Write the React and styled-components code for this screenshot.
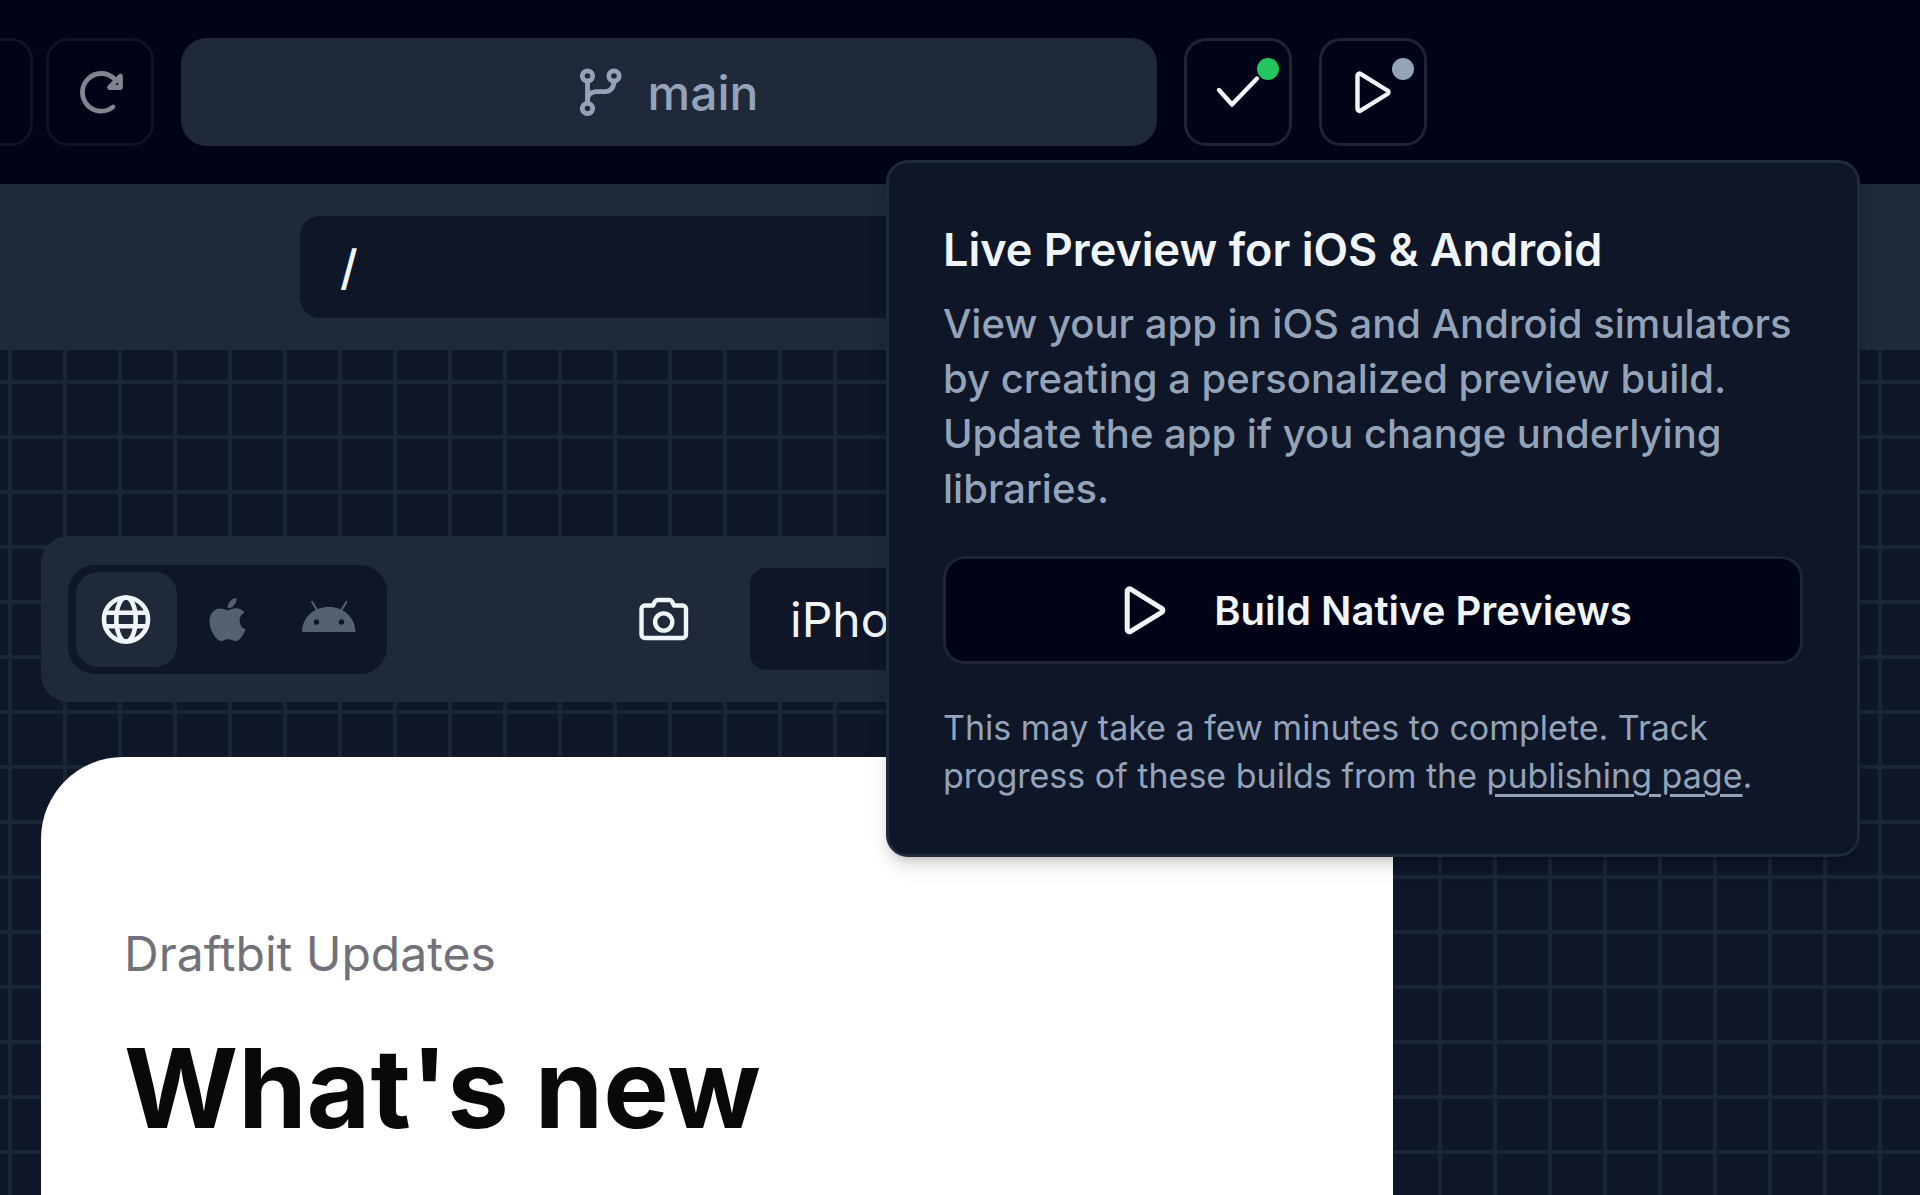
import React, { useState } from "react";
import styled, { createGlobalStyle, css } from "styled-components";
import { FaApple } from "react-icons/fa";

const GlobalStyle = createGlobalStyle`
  * {
    box-sizing: border-box;
  }

  body {
    margin: 0;
    overflow-x: hidden;
    background: #0e1628;
    color: #f1f5f9;
    font-family: Inter, "Liberation Sans", sans-serif;
  }

  h1, h2, p {
    margin: 0;
  }

  button, input, select {
    font: inherit;
    color: inherit;
  }
`;

const Page = styled.div`
  display: flex;
  flex-direction: column;
  min-height: 100vh;
`;

const Header = styled.header`
  display: flex;
  align-items: center;
  gap: 27px;
  padding: 38px 493px 38px 0;
  background: #000416;
`;

const HistoryNav = styled.nav`
  display: flex;
  gap: 13px;
  margin-left: -75px;
`;

const IconButton = styled.button`
  position: relative;
  display: flex;
  align-items: center;
  justify-content: center;
  flex: none;
  width: 108px;
  height: 108px;
  padding: 0;
  border: 3px solid #1e2436;
  border-radius: 22px;
  background: transparent;
  cursor: pointer;

  ${(props) =>
    props.disabled &&
    css`
      border-color: #0f1425;
      color: #82848f;
      cursor: default;
    `}
`;

const StatusDot = styled.span`
  position: absolute;
  top: 17px;
  right: 10px;
  width: 22px;
  height: 22px;
  border-radius: 50%;
  background: ${(props) => props.$color};
`;

const BranchButton = styled.button`
  display: flex;
  flex: 1;
  align-items: center;
  justify-content: center;
  gap: 24px;
  height: 108px;
  padding: 0;
  border: 0;
  border-radius: 26px;
  background: #1f293a;
  color: #94a3b8;
  font-size: 48px;
  font-weight: 500;
  cursor: pointer;
`;

const PreviewMenu = styled.div`
  position: relative;
  flex: none;
`;

const Popover = styled.section`
  position: absolute;
  z-index: 10;
  top: calc(100% + 14px);
  left: 50%;
  width: 974px;
  padding: 54px;
  border: 3px solid #1e293b;
  border-radius: 22px;
  background: #0e1628;
  box-shadow: 0 11px 20px -3px rgba(0, 0, 0, 0.15),
    0 5px 11px -5px rgba(0, 0, 0, 0.2);
  transform: translateX(-50%);
`;

const PopoverTitle = styled.h2`
  margin-bottom: 13px;
  font-size: 45px;
  font-weight: 600;
  line-height: 66px;
`;

const PopoverText = styled.p`
  color: #94a3b8;
  font-size: 40px;
  font-weight: 500;
  line-height: 55px;
`;

const BuildButton = styled.button`
  display: flex;
  align-items: center;
  justify-content: center;
  gap: 38px;
  width: 100%;
  height: 108px;
  margin: 40px 0;
  padding: 0;
  border: 3px solid #1e2436;
  border-radius: 22px;
  background: #000416;
  color: #f1f5f9;
  font-size: 40px;
  font-weight: 600;
  cursor: pointer;
`;

const PopoverNote = styled.p`
  color: #94a3b8;
  font-size: 34px;
  line-height: 48px;

  a {
    color: inherit;
    text-underline-offset: 6px;
    text-decoration-thickness: 3px;
  }
`;

const AddressBar = styled.div`
  padding: 32px 300px;
  background: #1f293a;
`;

const AddressInput = styled.input`
  display: block;
  width: 100%;
  height: 102px;
  padding: 0 40px;
  border: 0;
  border-radius: 20px;
  background: #0e1628;
  font-size: 48px;
  font-weight: 500;
`;

const Canvas = styled.main`
  display: flex;
  flex: 1;
  flex-direction: column;
  gap: 55px;
  padding: 186px 41px 0;
  background-color: #0e1628;
  background-image: linear-gradient(#1a2536 4px, transparent 4px),
    linear-gradient(90deg, #1a2536 4px, transparent 4px);
  background-position: 8px 30px;
  background-size: 55px 55px;
`;

const DeviceToolbar = styled.div`
  display: flex;
  align-items: center;
  width: 100%;
  max-width: 1352px;
  height: 166px;
  padding: 0 27px;
  border-radius: 27px;
  background: #1f293a;
`;

const PlatformGroup = styled.div`
  display: flex;
  padding: 7px 8px;
  border-radius: 27px;
  background: #0e1628;
`;

const PlatformButton = styled.button`
  display: flex;
  align-items: center;
  justify-content: center;
  width: 101px;
  height: 95px;
  padding: 0;
  border: 0;
  border-radius: 22px;
  background: ${(props) => (props.$active ? "#1f293a" : "transparent")};
  color: ${(props) => (props.$active ? "#f1f5f9" : "#566071")};
  cursor: pointer;
`;

const CaptureButton = styled.button`
  display: flex;
  align-items: center;
  justify-content: center;
  width: 108px;
  height: 108px;
  margin: 0 32px 0 auto;
  padding: 0;
  border: 0;
  background: transparent;
  cursor: pointer;
`;

const DeviceSelect = styled.select`
  appearance: none;
  width: 616px;
  height: 102px;
  padding: 0 40px;
  border: 0;
  border-radius: 16px;
  background: #0e1628;
  font-size: 48px;
`;

const DeviceScreen = styled.article`
  flex: 1;
  width: 100%;
  max-width: 1352px;
  padding: 165px 83px 0;
  border-radius: 82px 82px 0 0;
  background: #fff;
`;

const Eyebrow = styled.p`
  color: #71717a;
  font-size: 48px;
  line-height: 64px;
`;

const ScreenTitle = styled.h1`
  margin-top: 36px;
  color: #09090b;
  font-size: 110px;
  font-weight: 700;
  line-height: 132px;
`;

const Icon = ({ size = 54, width = 54, stroke = 4, children }) => (
  <svg
    width={(size * width) / 54}
    height={size}
    viewBox={`0 0 ${width} 54`}
    fill="none"
    stroke="currentColor"
    strokeWidth={stroke}
    strokeLinecap="round"
    strokeLinejoin="round"
    aria-hidden="true"
  >
    {children}
  </svg>
);

const ReloadIcon = () => (
  <Icon stroke={4.8}>
    <path d="M40 42A18.8 18.8 0 1 1 41 13.5" />
    <path d="M47.5 11v11.5h-11z" />
  </Icon>
);

const BranchIcon = () => (
  <Icon width={44} stroke={4.8}>
    <circle cx="7.5" cy="11" r="5.2" />
    <circle cx="34" cy="11" r="5.2" />
    <circle cx="7.5" cy="43.5" r="5.2" />
    <path d="M7.5 16v22M34 16c0 7-4 10.700-9 10.700h-8.500c-5 0-9 3-9 9" />
  </Icon>
);

const CheckIcon = () => (
  <Icon stroke={4.4}>
    <path d="M8 25l13 14.500L46 13.500" />
  </Icon>
);

const PlayIcon = ({ size }) => (
  <Icon size={size} stroke={4.4}>
    <path d="M11.500 10.500v33.500a2 2 0 0 0 3 1.700l27-16.700a2 2 0 0 0 0-3.500L14.500 8.800a2 2 0 0 0-3 1.700z" />
  </Icon>
);

const GlobeIcon = () => (
  <Icon stroke={4.6}>
    <circle cx="26" cy="27.500" r="22" />
    <ellipse cx="26" cy="27.500" rx="9.700" ry="22" />
    <path d="M5 20.800h42M5 34.200h42" />
  </Icon>
);

const CameraIcon = () => (
  <Icon stroke={4.4}>
    <path d="M4.500 17a3.500 3.500 0 0 1 3.500-3.500h8l2-4a3 3 0 0 1 2.500-1.500h12a3 3 0 0 1 2.500 1.500l2 4h8.500a3.500 3.500 0 0 1 3.500 3.500v25.500a3.500 3.500 0 0 1-3.500 3.500H8a3.500 3.500 0 0 1-3.500-3.500z" />
    <circle cx="26.700" cy="30" r="8.600" />
  </Icon>
);

const AndroidIcon = () => (
  <Icon stroke={2}>
    <path
      fill="currentColor"
      stroke="none"
      fillRule="evenodd"
      d="M0 39C1 25 11.500 15 26.700 15S52.500 25 53.500 39q0 1-1 1H1q-1 0-1-1zM14.500 27.300a2.700 2.700 0 1 0 0 5.400 2.700 2.700 0 0 0 0-5.400zM39.500 27.300a2.700 2.700 0 1 0 0 5.400 2.700 2.700 0 0 0 0-5.400z"
    />
    <path d="M10 9.800l6 10M44.500 9.800l-6 10" />
  </Icon>
);

const PLATFORMS = [
  { id: "web", label: "Web", icon: <GlobeIcon /> },
  { id: "ios", label: "iOS", icon: <FaApple size={49} /> },
  { id: "android", label: "Android", icon: <AndroidIcon /> },
];

const App = () => {
  const [path, setPath] = useState("/");
  const [platform, setPlatform] = useState("web");

  return (
    <>
      <GlobalStyle />
      <Page>
        <Header>
          <HistoryNav>
            <IconButton disabled aria-label="Undo" />
            <IconButton disabled aria-label="Redo">
              <ReloadIcon />
            </IconButton>
          </HistoryNav>

          <BranchButton>
            <BranchIcon />
            main
          </BranchButton>

          <IconButton aria-label="Project status">
            <CheckIcon />
            <StatusDot $color="#22c55e" />
          </IconButton>

          <PreviewMenu>
            <IconButton aria-label="Live preview">
              <PlayIcon />
              <StatusDot $color="#94a3b8" />
            </IconButton>

            <Popover>
              <PopoverTitle>Live Preview for iOS &amp; Android</PopoverTitle>
              <PopoverText>
                View your app in iOS and Android simulators by creating a
                personalized preview build. Update the app if you change
                underlying libraries.
              </PopoverText>
              <BuildButton>
                <PlayIcon size={62} />
                Build Native Previews
              </BuildButton>
              <PopoverNote>
                This may take a few minutes to complete. Track progress of these
                builds from the <a href="#publishing">publishing page</a>.
              </PopoverNote>
            </Popover>
          </PreviewMenu>
        </Header>

        <AddressBar>
          <AddressInput
            aria-label="Path"
            value={path}
            onChange={(e) => setPath(e.target.value)}
          />
        </AddressBar>

        <Canvas>
          <DeviceToolbar>
            <PlatformGroup>
              {PLATFORMS.map(({ id, label, icon }) => (
                <PlatformButton
                  key={id}
                  aria-label={label}
                  $active={platform === id}
                  onClick={() => setPlatform(id)}
                >
                  {icon}
                </PlatformButton>
              ))}
            </PlatformGroup>
            <CaptureButton aria-label="Take screenshot">
              <CameraIcon />
            </CaptureButton>
            <DeviceSelect aria-label="Device">
              <option>iPhone</option>
            </DeviceSelect>
          </DeviceToolbar>

          <DeviceScreen>
            <Eyebrow>Draftbit Updates</Eyebrow>
            <ScreenTitle>What's new</ScreenTitle>
          </DeviceScreen>
        </Canvas>
      </Page>
    </>
  );
};

export default App;
